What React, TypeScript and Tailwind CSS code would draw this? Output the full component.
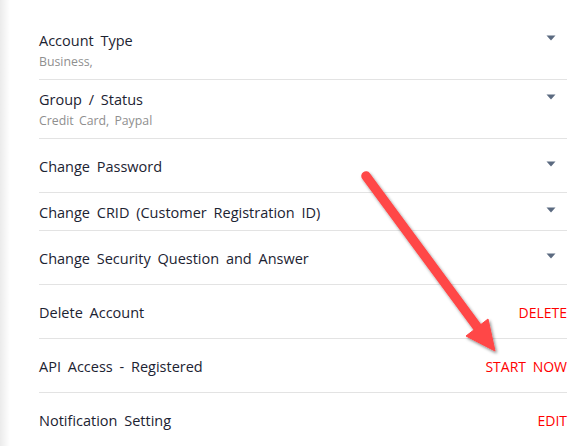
import React from 'react';

type Row = {
  title: string;
  sub?: string;
  action?: string;
  pad: string;
};

const rows: Row[] = [
  { title: 'Account Type', sub: 'Business,', pad: 'pt-[11px] pb-[9px]' },
  { title: 'Group / Status', sub: 'Credit Card, Paypal', pad: 'pt-[10px] pb-[9px]' },
  { title: 'Change Password', pad: 'pt-[18px] pb-[15px]' },
  { title: 'Change CRID (Customer Registration ID)', pad: 'pt-[10px] pb-[7px]' },
  { title: 'Change Security Question and Answer', pad: 'pt-[18px] pb-[15px]' },
  { title: 'Delete Account', action: 'DELETE', pad: 'pt-[18px] pb-[15px]' },
  { title: 'API Access - Registered', action: 'START NOW', pad: 'pt-[18px] pb-[15px]' },
  { title: 'Notification Setting', action: 'EDIT', pad: 'pt-[18px] pb-[15px]' },
];

const Caret = () => (
  <svg width="10" height="6" viewBox="0 0 10 6" className="mt-[4px] mr-[11px]">
    <path d="M0.5 0.5 L9.5 0.5 L5 5.5 Z" fill="#5b6a80" />
  </svg>
);

const SettingRow = ({ row, last }: { row: Row; last: boolean }) => (
  <div className={`flex items-start justify-between ${row.pad} ${last ? '' : 'border-b border-[#e3e3e3]'}`}>
    <div className="flex flex-col">
      <span className="text-[14.5px] leading-[20px] text-[#1c2332] [word-spacing:3px]">{row.title}</span>
      {row.sub && (
        <span className="mt-[3px] text-[12.3px] leading-[16px] text-[#8f8f8f] [word-spacing:2px]">{row.sub}</span>
      )}
    </div>
    {row.action ? (
      <span className="text-[14px] leading-[20px] text-[#ff0000] [word-spacing:3px]">{row.action}</span>
    ) : (
      <Caret />
    )}
  </div>
);

const App = () => {
  return (
    <div className="relative flex h-[446px] w-[582px] overflow-hidden bg-white font-['Open_Sans',sans-serif]">
      {/* left edge shade */}
      <div className="w-[10px] shrink-0 bg-gradient-to-r from-[#ebebeb] to-white" />

      <div className="flex-1 pl-[29px] pr-[15px] pt-[20px]">
        {rows.map((row, i) => (
          <SettingRow key={row.title} row={row} last={i === rows.length - 1} />
        ))}
      </div>

      {/* annotation arrow */}
      <svg className="pointer-events-none absolute left-0 top-0" width="582" height="446">
        <defs>
          <filter id="shadow" x="-20%" y="-20%" width="140%" height="140%">
            <feDropShadow dx="1.5" dy="2" stdDeviation="1.8" floodColor="#000" floodOpacity="0.45" />
          </filter>
        </defs>
        <g filter="url(#shadow)" fill="#ff4646" stroke="#ff4646">
          <line x1="366" y1="176" x2="478" y2="328" strokeWidth="9.5" strokeLinecap="round" />
          <polygon points="495,351 466,336 488,319" strokeWidth="1" strokeLinejoin="round" />
        </g>
      </svg>
    </div>
  );
};

export default App;
